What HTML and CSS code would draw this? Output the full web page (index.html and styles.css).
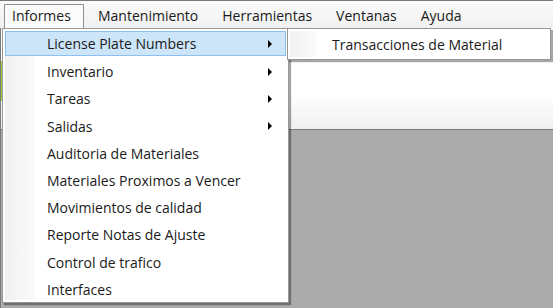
FILE: index.html
```html
<!DOCTYPE html>
<html lang="es">
<head>
  <meta charset="UTF-8">
  <title>Informes</title>
  <link rel="stylesheet" href="styles.css">
</head>
<body>
  <div class="menubar">
    <div class="top-item open">Informes</div>
    <div class="top-item">Mantenimiento</div>
    <div class="top-item">Herramientas</div>
    <div class="top-item">Ventanas</div>
    <div class="top-item">Ayuda</div>
  </div>

  <div class="workarea">
    <div class="toolbar"></div>
  </div>
  <div class="desktop"></div>

  <div class="dropdown">
    <div class="gutter"></div>
    <ul class="items">
      <li class="item active">License Plate Numbers <span class="arrow"></span></li>
      <li class="item">Inventario <span class="arrow"></span></li>
      <li class="item">Tareas <span class="arrow"></span></li>
      <li class="item">Salidas <span class="arrow"></span></li>
      <li class="item">Auditoria de Materiales</li>
      <li class="item">Materiales Proximos a Vencer</li>
      <li class="item">Movimientos de calidad</li>
      <li class="item">Reporte Notas de Ajuste</li>
      <li class="item">Control de trafico</li>
      <li class="item">Interfaces</li>
    </ul>
  </div>

  <div class="submenu">
    <div class="gutter"></div>
    <ul class="items">
      <li class="item">Transacciones de Material</li>
    </ul>
  </div>
</body>
</html>
```

FILE: styles.css
```css
body {
  margin: 0;
  width: 553px;
  height: 308px;
  overflow: hidden;
  position: relative;
  font-family: "Open Sans", "Noto Sans", sans-serif;
  font-size: 14px;
  color: #1a1a1a;
  background: #ababab;
}

.menubar {
  height: 27px;
  border-top: 1px solid #7a7a7a;
  background: linear-gradient(#fafafa, #f1f1f1);
  display: flex;
  align-items: flex-end;
  padding-left: 4px;
}

.top-item {
  height: 24px;
  line-height: 22px;
  padding: 0 11px 0 7px;
  margin-right: 4px;
  border: 1px solid transparent;
  border-bottom: none;
  box-sizing: border-box;
}

.top-item.open {
  width: 80px;
  margin-right: 6px;
  border-color: #8e8e8e;
  background: #fbfbfb;
}

.workarea {
  height: 102px;
  padding-top: 33px;
  box-sizing: border-box;
  border-left: 1px solid #7a7a7a;
  border-bottom: 1px solid #7c7c7c;
  background: linear-gradient(#ffffff 0, #ffffff 65%, #f0f0f0 100%);
}

.toolbar {
  width: 3px;
  height: 40px;
  background: #9fd23a;
}

.desktop {
  height: 178px;
  border-left: 1px solid #7a7a7a;
}

.dropdown,
.submenu {
  position: absolute;
  background: #fff;
  border: 1px solid #979797;
  box-shadow: 2px 2px 1px rgba(0, 0, 0, 0.35);
  display: flex;
  overflow: hidden;
}

.dropdown {
  left: 2px;
  top: 28px;
  width: 285px;
  height: 273px;
}

.submenu {
  left: 287px;
  top: 28px;
  width: 262px;
  height: 30px;
  z-index: 2;
}

.gutter {
  position: absolute;
  left: 2px;
  top: 2px;
  bottom: 2px;
  width: 30px;
  background: linear-gradient(90deg, #f1f1f1, #fafafa);
}

.submenu .gutter {
  width: 26px;
}

.items {
  list-style: none;
  margin: 0;
  padding: 2px 2px 0;
  width: 100%;
  position: relative;
}

.item {
  height: 27.2px;
  line-height: 26px;
  padding-left: 41px;
  position: relative;
  box-sizing: border-box;
  border: 1px solid transparent;
  white-space: nowrap;
}

.item.active {
  background: #cde5f8;
  border-color: #8fc0ec;
  height: 25px;
  line-height: 23px;
  margin-bottom: 2.2px;
}

.submenu .item {
  padding-left: 41px;
  height: 26px;
  line-height: 26px;
}

.arrow {
  position: absolute;
  right: 13px;
  top: 50%;
  margin-top: -4px;
  width: 0;
  height: 0;
  border-top: 4px solid transparent;
  border-bottom: 4px solid transparent;
  border-left: 4px solid #000;
}
```
